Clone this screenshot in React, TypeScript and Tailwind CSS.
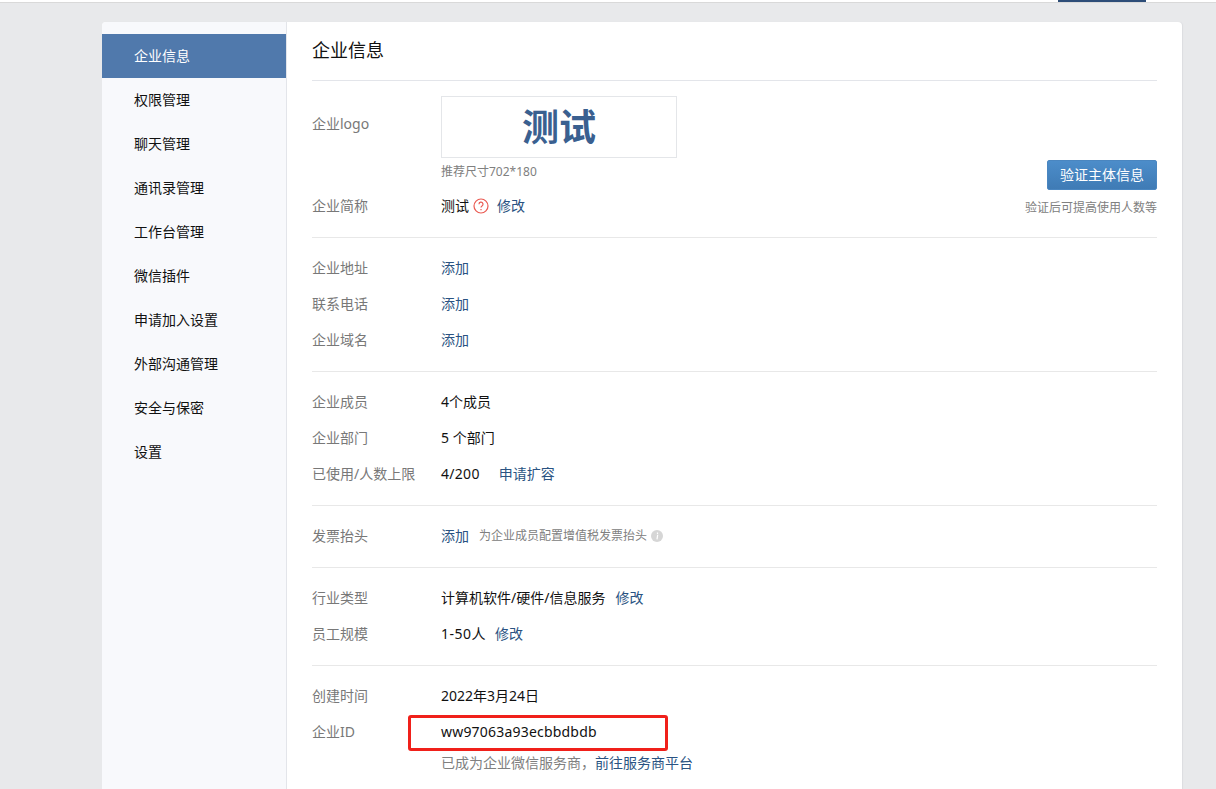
import React from "react";

const menu = ["企业信息", "权限管理", "聊天管理", "通讯录管理", "工作台管理", "微信插件", "申请加入设置", "外部沟通管理", "安全与保密", "设置"];

const Row = ({ label, children }: { label: string; children: React.ReactNode }) => (
  <div className="flex h-9 items-center text-sm">
    <div className="w-[129px] shrink-0 text-[#787878]">{label}</div>
    <div className="flex items-center text-[#111]">{children}</div>
  </div>
);

const Link = ({ children, className = "" }: { children: React.ReactNode; className?: string }) => (
  <a className={`text-[#2a5382] ${className}`}>{children}</a>
);

const Section = ({ children }: { children: React.ReactNode }) => (
  <div className="border-b border-[#e8e8e8] pt-3 pb-[13px]">{children}</div>
);

const App = () => {
  return (
    <div className="h-[789px] overflow-hidden bg-[#e8e9eb] font-['Noto_Sans','Noto_Sans_CJK_SC',sans-serif]">
      {/* top bar */}
      <div className="flex h-[3px] justify-end border-b border-[#d9d9d9] bg-white pr-[70px]">
        <div className="h-[2px] w-[88px] bg-[#2d4d78]" />
      </div>

      <div className="mt-[19px] ml-[102px] flex min-h-[800px] w-[1080px] rounded-[4px] bg-white shadow-[1px_0_1px_#dcdde0]">
        {/* sidebar */}
        <div className="w-[185px] shrink-0 rounded-l-[4px] border-r border-[#e3e5ea] bg-[#f8f9fc] pt-3">
          {menu.map((item, i) => (
            <div
              key={item}
              className={`flex h-11 items-center pl-8 text-sm ${i === 0 ? "bg-[#5079ac] text-white" : "text-[#111]"}`}
            >
              {item}
            </div>
          ))}
        </div>

        {/* content */}
        <div className="flex-1 pr-[25px] pl-[25px]">
          <div className="flex h-[59px] items-center border-b border-[#e3e5ea] pb-[2px] text-lg text-[#111]">企业信息</div>

          <div className="flex justify-between border-b border-[#e8e8e8] pt-[15px] pb-[13px]">
            <div>
              <div className="flex">
                <div className="w-[129px] shrink-0 pt-[18px] text-sm text-[#787878]">企业logo</div>
                <div>
                  <div className="flex h-[62px] w-[236px] items-center justify-center border border-[#e4e6e9] text-[37px] font-bold text-[#3a6090]">
                    测试
                  </div>
                  <div className="mt-[6px] text-xs leading-4 text-[#808080]">推荐尺寸702*180</div>
                </div>
              </div>
              <div className="mt-2">
                <Row label="企业简称">
                  <span>测试</span>
                  <svg className="mr-2 ml-1 h-4 w-4" viewBox="0 0 16 16" fill="none" stroke="#ea5a52" strokeWidth="1.2">
                    <circle cx="8" cy="8" r="7" />
                    <path d="M6 6.2a2 2 0 1 1 3 1.7c-.7.4-1 .8-1 1.6" />
                    <path d="M8 11v1.2" />
                  </svg>
                  <Link>修改</Link>
                </Row>
              </div>
            </div>
            <div className="flex flex-col items-end pt-[64px]">
              <button className="h-[30px] w-[110px] rounded-[2px] border border-[#4a86c0] bg-gradient-to-b from-[#4c8dca] to-[#3f7bb5] text-sm text-white">
                验证主体信息
              </button>
              <div className="mt-2 text-xs leading-5 text-[#808080]">验证后可提高使用人数等</div>
            </div>
          </div>

          <Section>
            <Row label="企业地址"><Link>添加</Link></Row>
            <Row label="联系电话"><Link>添加</Link></Row>
            <Row label="企业域名"><Link>添加</Link></Row>
          </Section>

          <Section>
            <Row label="企业成员">4个成员</Row>
            <Row label="企业部门">5 个部门</Row>
            <Row label="已使用/人数上限">
              <span className="tracking-[0.3px]">4/200</span>
              <Link className="ml-[19px]">申请扩容</Link>
            </Row>
          </Section>

          <Section>
            <Row label="发票抬头">
              <Link>添加</Link>
              <span className="ml-[10px] text-xs text-[#808080]">为企业成员配置增值税发票抬头</span>
              <svg className="ml-1 h-3 w-3" viewBox="0 0 12 12">
                <circle cx="6" cy="6" r="6" fill="#d6d6d6" />
                <path d="M6.5 2.6v1.3M6 5.3h.6L6 9.3" stroke="#fff" strokeWidth="1.2" fill="none" />
              </svg>
            </Row>
          </Section>

          <Section>
            <Row label="行业类型">
              <span>计算机软件/硬件/信息服务</span>
              <Link className="ml-[10px]">修改</Link>
            </Row>
            <Row label="员工规模">
              <span className="tracking-[0.5px]">1-50人</span>
              <Link className="ml-[9px]">修改</Link>
            </Row>
          </Section>

          <div className="pt-3">
            <Row label="创建时间">2022年3月24日</Row>
            <div className="relative">
              <Row label="企业ID">
                <span className="tracking-[0.2px]">ww97063a93ecbbdbdb</span>
              </Row>
              {/* red annotation box */}
              <div className="absolute top-[1px] left-[96px] h-[36px] w-[260px] rounded-[3px] border-[3px] border-[#f0201a]" />
            </div>
            <div className="flex h-[26px] items-center pl-[129px] text-sm text-[#808080]">
              已成为企业微信服务商，<Link>前往服务商平台</Link>
            </div>
          </div>
        </div>
      </div>
    </div>
  );
};

export default App;
